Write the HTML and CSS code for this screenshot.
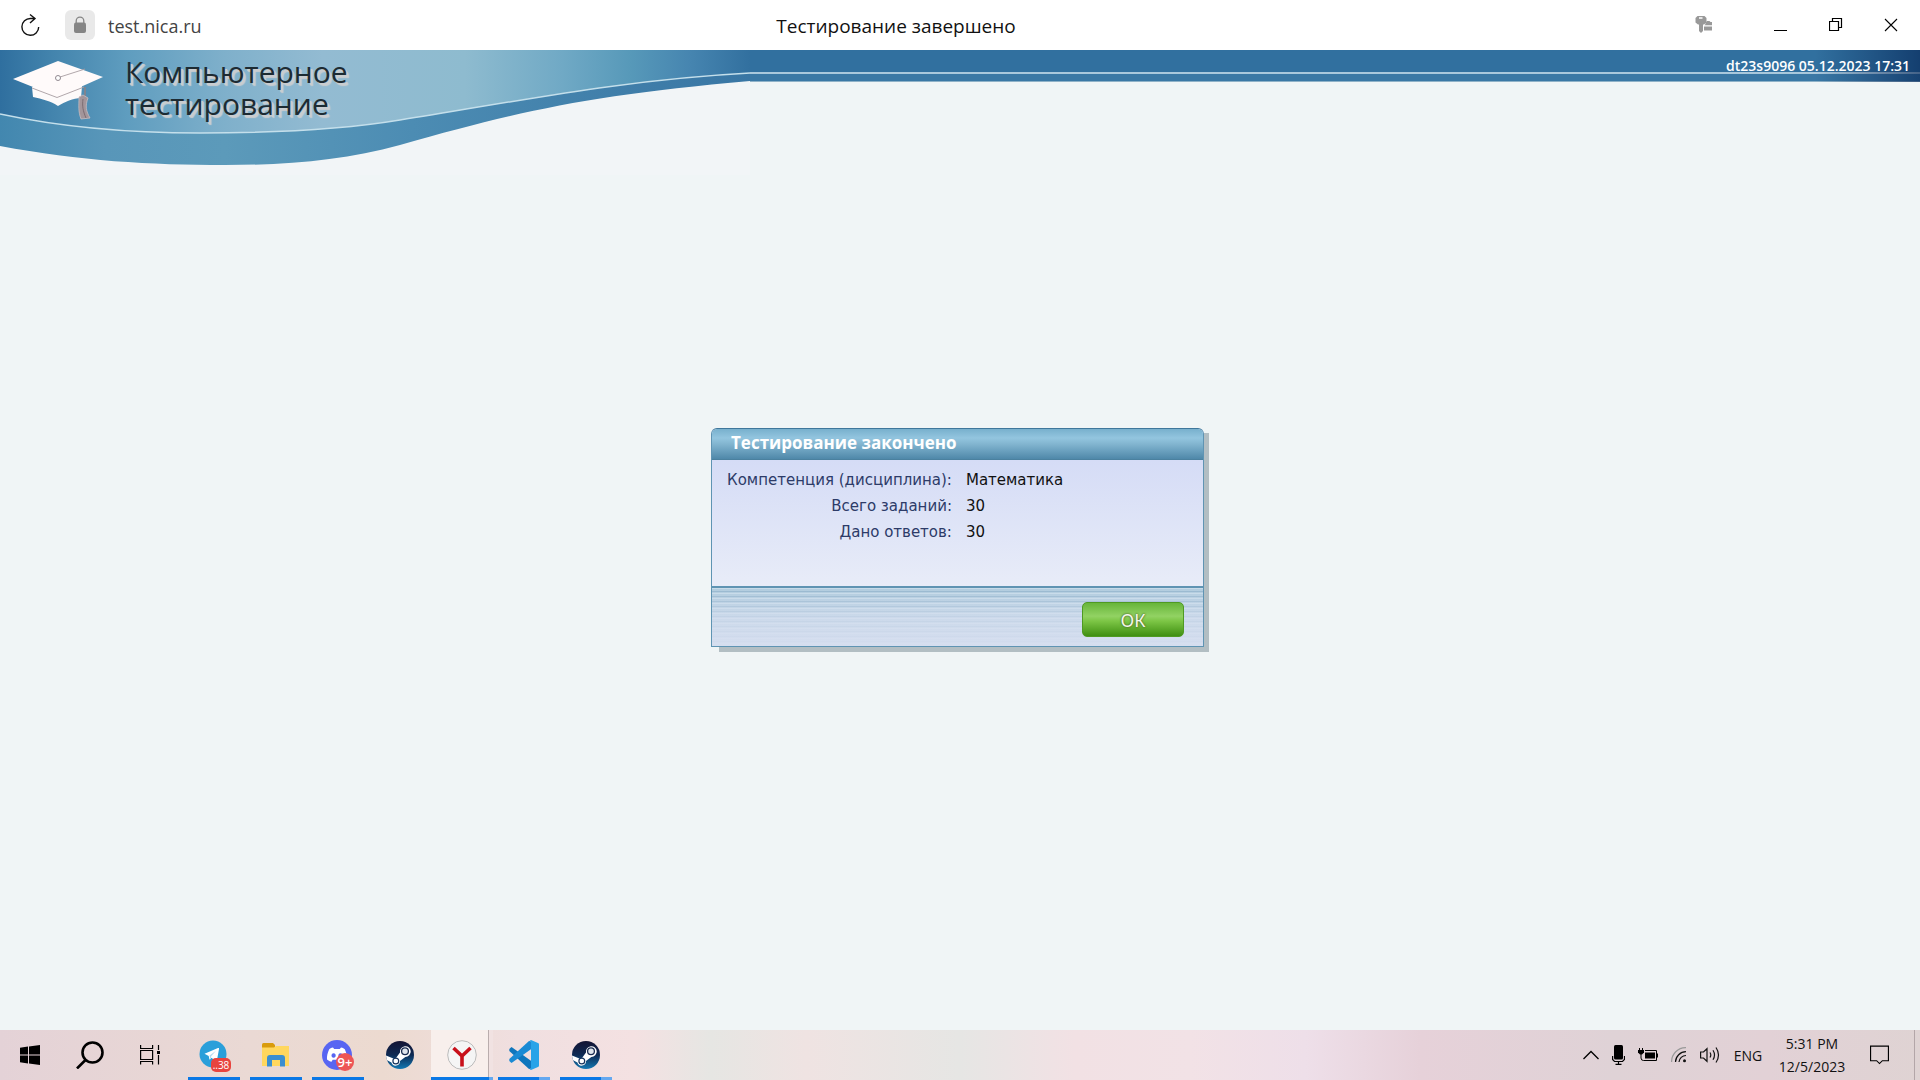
FILE: index.html
```html
<!DOCTYPE html>
<html lang="ru">
<head>
<meta charset="utf-8">
<title>Тестирование завершено</title>
<meta name="viewport" content="width=device-width, initial-scale=1">
<link rel="stylesheet" href="styles.css">
</head>
<body>
<header class="browser">
  <div class="browser-left">
    <button class="reload" type="button" aria-label="Обновить">
      <svg width="20" height="24" viewBox="0 0 20 24" fill="none" stroke="#111" stroke-width="1.400"><path d="M15 5.500H10.500A8.400 8.400 0 1 0 18.700 14M10 1.500L15 5.500L10 10"/></svg>
    </button>
    <button class="lock" type="button" aria-label="Защищённое соединение">
      <svg width="12" height="18" viewBox="0 0 12 18"><path d="M2.200 8V5a3.800 3.800 0 0 1 7.600 0v3" fill="none" stroke="#858585" stroke-width="1.300"/><rect y="6.500" width="12" height="10.500" rx="2" fill="#858585"/></svg>
    </button>
    <input class="address" type="text" value="test.nica.ru" aria-label="Адрес" readonly>
  </div>
  <div class="browser-title">Тестирование завершено</div>
  <div class="browser-right">
    <button class="key" type="button" aria-label="Пароли">
      <svg width="18" height="18" viewBox="0 0 18 18" fill="#999"><path fill-rule="evenodd" d="M2.500 0h7L11.500 2v4.500L9 8.500H8V15l-2 2-2-2V8.500H3L.5 6.500V2zM4 1.300v1.400h3.500V1.300z"/><path d="M10.500 8V7L12 5h2.500l1 1H17v3.200H9.500zM9 10.400h8v4.100H9z"/></svg>
    </button>
    <button class="win" type="button" aria-label="Свернуть"><svg width="14" height="14" viewBox="0 0 14 14"><path d="M0 12.500h13" stroke="#000"/></svg></button>
    <button class="win" type="button" aria-label="Восстановить"><svg width="14" height="14" viewBox="0 0 14 14" fill="none" stroke="#000" stroke-width="1.200"><path d="M.5 3.500h9v9h-9zM3.500 3.500v-3h9v9h-3"/></svg></button>
    <button class="win" type="button" aria-label="Закрыть"><svg width="14" height="14" viewBox="0 0 14 14"><path d="M1 1l12 12M13 1L1 13" stroke="#000" stroke-width="1.100"/></svg></button>
  </div>
</header>

<main class="page">
  <div class="banner">
    <svg class="wave" width="750" height="125" viewBox="0 50 750 125" aria-hidden="true">
      <defs>
        <linearGradient id="sky" gradientUnits="userSpaceOnUse" x1="0" y1="0" x2="750" y2="0">
          <stop offset="0" stop-color="#2f6f9f"/><stop offset=".07" stop-color="#4384ad"/><stop offset=".17" stop-color="#5f9dbf"/><stop offset=".3" stop-color="#7fb0cb"/><stop offset=".43" stop-color="#93bbd2"/><stop offset=".62" stop-color="#8ebbcf"/><stop offset=".75" stop-color="#70a9c5"/><stop offset=".84" stop-color="#5799b9"/><stop offset=".92" stop-color="#4685b0"/><stop offset="1" stop-color="#32709f"/>
        </linearGradient>
        <linearGradient id="sea" gradientUnits="userSpaceOnUse" x1="0" y1="0" x2="750" y2="0">
          <stop offset="0" stop-color="#4287af"/><stop offset=".14" stop-color="#5896b9"/><stop offset=".3" stop-color="#5c9aba"/><stop offset=".55" stop-color="#4c8cb3"/><stop offset="1" stop-color="#3976a4"/>
        </linearGradient>
      </defs>
      <rect y="50" width="750" height="125" fill="#f2f5f7"/>
      <path fill="url(#sea)" d="M0 50V146C80 161 150 165 225 165C290 165 345 160 400 145C520 111 590 95 750 81V50z"/>
      <path fill="url(#sky)" d="M0 50V114C70 129 140 133 200 133C270 133 340 130 400 120C520 101 620 80 750 73V50z"/>
      <path fill="none" stroke="#c4dfeb" stroke-width="1.500" d="M0 114C70 129 140 133 200 133C270 133 340 130 400 120C520 101 620 80 750 73"/>
      <path fill="#fdfafa" d="M32 87l1 10c9 2 18 4 25 9 7-4 15-8 23-8l1-12z"/>
      <path fill="#fffafa" d="M13 79L58 61L103 77L58 97z"/>
      <path fill="none" stroke="#a89da2" stroke-width=".9" d="M32 88l25 9.500 27-10.500M60 77l25-8"/>
      <circle cx="58" cy="78" r="2.500" fill="#fff" stroke="#918890"/>
      <path fill="none" stroke="#8f8085" stroke-width="1.500" d="M85 87v9"/>
      <path fill="#a3959a" stroke="#c8bcc0" stroke-width=".8" d="M79 97l4-2 5 3c-3 8-2 13 2 20l-9 1c-3-8-2-13-2-22z"/>
      <path fill="none" stroke="#7b6c72" d="M83 99c-1 7 0 12 3 19"/>
    </svg>
    <h1 class="brand">Компьютерное<br>тестирование</h1>
    <div class="session">dt23s9096 05.12.2023 17:31</div>
  </div>

  <div class="dialog-shadow">
    <section class="dialog" aria-labelledby="dialog-title">
      <h2 class="dialog-title" id="dialog-title">Тестирование закончено</h2>
      <div class="dialog-body">
        <table class="summary">
          <tbody>
            <tr><th scope="row">Компетенция (дисциплина):</th><td>Математика</td></tr>
            <tr><th scope="row">Всего заданий:</th><td>30</td></tr>
            <tr><th scope="row">Дано ответов:</th><td>30</td></tr>
          </tbody>
        </table>
      </div>
      <div class="dialog-footer"><button class="ok" type="button">ОК</button></div>
    </section>
  </div>
</main>

<footer class="taskbar">
  <div class="system">
    <button type="button" aria-label="Start"><svg width="20" height="20" viewBox="0 0 20 20"><path d="M0 2.700L8 1.600V9.500H0zM9 1.400L20 0v9.500H9zM0 10.500h8v7.900L0 17.300zM9 10.500h11V20L9 18.600z"/></svg></button>
    <button type="button" aria-label="Search"><svg width="28" height="28" viewBox="0 0 28 28" fill="none" stroke="#000" stroke-width="2.600"><circle cx="16.500" cy="11.500" r="10"/><path d="M9.500 19L1 27.500"/></svg></button>
    <button type="button" aria-label="Task View"><svg width="20" height="20" viewBox="0 0 20 20" fill="none" stroke="#000" stroke-width="1.200"><path d="M.6 0v3.500h12V0M.6 5.500h12v9H.6zM.6 19.500V16.500h12v3M18.500 0v5M18.500 10v9.500"/><path d="M17 6h3v3h-3z" fill="#000" stroke="none"/></svg></button>
  </div>
  <div class="apps">
    <button class="app open" type="button" aria-label="Telegram">
      <svg width="34" height="32" viewBox="0 0 34 32"><circle cx="16" cy="15" r="13.500" fill="#2a9fda"/><path fill="#fff" d="M7.500 14.800L21 9c.8-.2 1.200.2 1 1L20 21c-.3 1-.9 1.200-1.700.7l-3.800-2.900-2 1.900-.8-3.700z"/><path fill="#b9dcf0" d="M12.500 16.500l6.500-4.800-4.800 5.500-.7 3.500z"/></svg>
      <span class="badge badge-count">..38</span>
    </button>
    <button class="app open" type="button" aria-label="Explorer">
      <svg width="28" height="24" viewBox="0 0 28 24"><path fill="#d99b0c" d="M0 1.500Q0 0 1.500 0H11l2 2v3H0z"/><path fill="#ffd75e" d="M0 4.500h12l2-1.500h13v20H0z"/><path fill="#3b8fd0" d="M5 23.500V15q0-3 3-3h12q3 0 3 3v8.500h-5V17h-8v6.500z"/></svg>
    </button>
    <button class="app open" type="button" aria-label="Discord">
      <svg width="32" height="32" viewBox="0 0 32 32"><circle cx="15" cy="16" r="15" fill="#5865f2"/><path fill="#fff" fill-rule="evenodd" d="M11 8.500l1.200 1.500h5.600L19 8.500c2 .3 3 1 3.800 1.800 1.700 3.700 2.500 6.700 2.200 10.200-1.500 1.300-3 2-4.500 2.200l-1.200-2h-8.600l-1.200 2C8 22.500 6.500 21.800 5 20.500c-.3-3.500.5-6.500 2.200-10.200C8 9.500 9 8.800 11 8.500zM11.600 14.200a2.100 2.300 0 1 0 .01 0zM18.500 14.200a2.100 2.300 0 1 0 .01 0z"/></svg>
      <span class="badge badge-round">9+</span>
    </button>
    <button class="app" type="button" aria-label="Steam">
      <svg width="30" height="30" viewBox="0 0 30 30"><defs><linearGradient id="steam" x1="0" y1="0" x2="0" y2="1"><stop offset="0" stop-color="#141433"/><stop offset=".5" stop-color="#0d2a54"/><stop offset="1" stop-color="#1379b3"/></linearGradient></defs><circle cx="15" cy="15" r="14" fill="url(#steam)"/><path fill="#fff" d="M1 15.500l8 3.300 2-.7 4-5.700a5.400 5.400 0 1 1 5.300 4.600l-5.300 4a4.400 4.400 0 0 1-8.600 1.500L1.700 20z"/><circle cx="20" cy="11.300" r="3.400" fill="#dfe5ec" stroke="#1a2c50" stroke-width="1.300"/><circle cx="10.800" cy="21" r="2.900" fill="none" stroke="#16345e" stroke-width="1.200"/></svg>
    </button>
    <button class="app active open" type="button" aria-label="Yandex Browser">
      <svg width="30" height="30" viewBox="0 0 30 30"><circle cx="15" cy="15" r="14.300" fill="#f5f5f5" stroke="#bbb"/><path fill="none" stroke="#c8101a" stroke-width="3.600" d="M6.500 8l8.500 8v10.500M23.500 8L15 16"/></svg>
    </button>
    <button class="app open stacked" type="button" aria-label="Visual Studio Code">
      <svg width="30" height="30" viewBox="0 0 30 30"><path fill="#0f76bd" d="M2.500 7L.3 9v2L20 29l3-.5V21.500z"/><path fill="#1a8ad4" d="M2.500 23L.3 21v-2L20 1l3 .5v7z"/><path fill="#29a3e8" d="M22 0l7 3q1 .4 1 1.500v21q0 1.100-1 1.500l-7 3q-1 .2-1.500-.5 1.500.2 1.500-1.500V2Q22 .4 20.500.5z"/></svg>
    </button>
    <button class="app open stacked" type="button" aria-label="Steam">
      <svg width="30" height="30" viewBox="0 0 30 30"><circle cx="15" cy="15" r="14" fill="url(#steam)"/><path fill="#fff" d="M1 15.500l8 3.300 2-.7 4-5.700a5.400 5.400 0 1 1 5.300 4.600l-5.300 4a4.400 4.400 0 0 1-8.600 1.500L1.700 20z"/><circle cx="20" cy="11.300" r="3.400" fill="#dfe5ec" stroke="#1a2c50" stroke-width="1.300"/><circle cx="10.800" cy="21" r="2.900" fill="none" stroke="#16345e" stroke-width="1.200"/></svg>
    </button>
  </div>
  <div class="tray">
    <button type="button" aria-label="Hidden icons"><svg width="16" height="10" viewBox="0 0 16 10"><path d="M.5 9L8 1.500 15.500 9" fill="none" stroke="#000" stroke-width="1.300"/></svg></button>
    <button type="button" aria-label="Microphone"><svg width="13" height="20" viewBox="0 0 13 20"><rect x="2" width="9" height="14.500" rx="1.500"/><path d="M.6 11v3.500L2.500 16.500h8l2-2V11M6.500 16.500v3M3.500 19.400h6" fill="none" stroke="#000" stroke-width="1.200"/></svg></button>
    <button type="button" aria-label="Battery"><svg width="20" height="14" viewBox="0 0 20 14"><path d="M7 4.500h10v6H7z"/><path d="M7 2.500h11.500v10H5.500M19.500 5.500v4M1.500 0v2M4.500 0v2M3 6v4q0 2.500 2.500 2.500" fill="none" stroke="#000"/><path d="M0 2h6v2.500l-2 2H2l-2-2z"/></svg></button>
    <button type="button" aria-label="Wi-Fi"><svg width="16" height="16" viewBox="0 0 16 16" fill="none" stroke="#111" stroke-width="1.200"><path d="M.6 15A14 14 0 0 1 15 .7" stroke="#999"/><path d="M4.500 15A10.500 10.500 0 0 1 15 4.700M8 15a7 7 0 0 1 7-6.500"/><circle cx="13.500" cy="13.800" r="1.500" fill="#111" stroke="none"/></svg></button>
    <button type="button" aria-label="Volume"><svg width="20" height="18" viewBox="0 0 20 18" fill="none" stroke="#111" stroke-width="1.200"><path d="M.6 6h2.900L7 2.700v12.600L3.500 12H.6zM10 6.500q1.600 2.500 0 5M13 4.200q3 4.800 0 9.600M16 1.500q5 7.500 0 15"/></svg></button>
    <button class="lang" type="button">ENG</button>
    <button class="clock" type="button">5:31 PM<br>12/5/2023</button>
    <button class="notes" type="button" aria-label="Notifications"><svg width="20" height="20" viewBox="0 0 20 20"><path d="M.6.6h18.800v15.400H13L10 19l-3-3H.6z" fill="none" stroke="#000" stroke-width="1.200"/></svg></button>
  </div>
</footer>
</body>
</html>
```
FILE: styles.css
```css
* { box-sizing: border-box; }

body {
  margin: 0;
  min-height: 100vh;
  display: flex;
  flex-direction: column;
  background: #f0f5f6;
  font-family: "Open Sans", "Noto Sans", sans-serif;
}

button {
  display: flex;
  align-items: center;
  justify-content: center;
  padding: 0;
  border: 0;
  background: none;
  color: inherit;
  font: inherit;
}

svg { display: block; }

/* Browser bar */
.browser {
  display: flex;
  align-items: center;
  height: 50px;
  background: #fff;
  color: #111;
  font-size: 18px;
}
.browser-left {
  display: flex;
  align-items: center;
  width: 220px;
  padding-left: 20px;
}
.reload { width: 20px; }
.lock {
  width: 30px;
  height: 30px;
  margin: 0 13px 0 25px;
  border-radius: 6px;
  background: #e9e9e9;
}
.address {
  width: 110px;
  padding: 2px 0 0;
  border: 0;
  background: none;
  color: #444;
  font: inherit;
}
.browser-title {
  flex: 1;
  padding-top: 2px;
  font-size: 19px;
  text-align: center;
}
.browser-right {
  display: flex;
  justify-content: flex-end;
  width: 348px;
  padding-right: 2px;
}
.key { width: 54px; margin-right: 22px; }
.win { width: 55px; height: 50px; }

/* Page */
.page {
  flex: 1;
  display: grid;
  grid-template: 1fr / 1fr;
}
.page > * { grid-area: 1 / 1; }

.banner {
  display: grid;
  grid-template: 32px 1fr / 750px 1fr;
  align-self: start;
  background:
    linear-gradient(90deg, transparent, rgba(0, 30, 80, .6)) right top / 105px 32px no-repeat,
    linear-gradient(#31709f 22px, #a9c8dc 22px, #a9c8dc 24px, #3a78a5 24px, #3a78a5 31px, #8fb2c8 31px) left top / 100% 32px no-repeat;
}
.wave { grid-area: 1 / 1 / 3 / 2; }
.brand {
  grid-area: 1 / 1 / 3 / 2;
  margin: 6px 0 0 125px;
  color: #1d2b33;
  font-size: 30px;
  font-weight: 400;
  line-height: 32px;
  text-shadow: 2px 2px 0 #c9cdd0, 3px 3px 1px #c9cdd0;
}
.session {
  grid-area: 1 / 2;
  padding-right: 10px;
  color: #fff;
  font-size: 14px;
  font-weight: 600;
  line-height: 32px;
  text-align: right;
}

/* Dialog */
.dialog-shadow {
  place-self: center;
  padding: 0 5px 5px 0;
  background: linear-gradient(#b2bec3, #b2bec3) 8px 5px no-repeat;
}
.dialog {
  width: 493px;
  border: 1px solid #5f94b3;
  border-top-color: #3f779b;
  border-radius: 6px 6px 0 0;
  overflow: hidden;
  background: #dbe0f5;
}
.dialog-title {
  margin: 0;
  padding: 0 0 2px 19px;
  border-bottom: 1px solid #4b819f;
  background: linear-gradient(#78b0cd, #93c5df 30%, #82b5d0 50%, #4f88a9);
  color: #fff;
  font-size: 17px;
  font-weight: 700;
  line-height: 28px;
}
.dialog-body {
  min-height: 126px;
  padding: 7px 15px;
  background: linear-gradient(#d5dcf6, #e8ecf8);
}
.summary {
  border-collapse: collapse;
  font-family: "DejaVu Sans", Verdana, sans-serif;
  font-size: 15px;
  line-height: 26px;
}
.summary th {
  padding: 0;
  color: #2d3b68;
  font-weight: 400;
  text-align: right;
}
.summary td { padding: 0 0 0 14px; color: #111; }
.dialog-footer {
  display: flex;
  justify-content: flex-end;
  padding: 14px 19px 9px;
  border-top: 2px solid #5f94b3;
  background:
    linear-gradient(rgba(215, 223, 240, 0), rgba(215, 223, 240, .7) 50%, rgba(215, 223, 240, .95)),
    repeating-linear-gradient(#c7dbe9 0 1px, #b1ccde 1px 3px, #96b7ce 3px 4px, #b1ccde 4px 5px);
}
.ok {
  width: 102px;
  height: 35px;
  border: 1px solid #4f9a22;
  border-radius: 5px;
  background: linear-gradient(#67b53a, #92d263 40%, #7cc545 55%, #3f8f12);
  color: #f4f8ea;
  font-family: "Noto Sans", sans-serif;
  font-size: 18px;
  text-shadow: 0 0 2px #55702c, 0 0 2px #55702c;
}

/* Taskbar */
.taskbar {
  display: flex;
  height: 50px;
  background: linear-gradient(90deg, #e4d2d7, #ead9d4 13%, #ecdad0 20%, #f0dfe0 27%, #f4e1e2 33%, #e6e6e3 37%, #efe3e2 42%, #e6e6e4 50%, #f2e1e4 56%, #f2e2e6 62%, #eedfe9 68%, #e6d1d9 74%, #dfd2d6 84%, #e2d1d6 92%, #dfd3d3);
}
.system { display: flex; }
.system button { width: 60px; }
.apps { display: flex; margin-left: 3px; }
.app {
  position: relative;
  width: 62px;
}
.app.open::after {
  content: "";
  position: absolute;
  left: 5px;
  right: 5px;
  bottom: 0;
  height: 3px;
  background: #0a78e6;
}
.app.active { background: linear-gradient(90deg, #f8efec 57px, #b9adad 57px, #b9adad 58px, #f1e2e2 58px); }
.app.active::after { left: 0; right: 0; background: linear-gradient(90deg, #0a78e6 58px, #64a8f0 58px); }
.app.stacked::after { background: linear-gradient(90deg, #0a78e6 41px, #64a8f0 41px); }
.badge {
  position: absolute;
  background: #e8443f;
  color: #fff;
}
.badge-count {
  left: 28px;
  top: 28px;
  width: 20px;
  border-radius: 5px;
  font-size: 10px;
  line-height: 14px;
}
.badge-round {
  left: 29px;
  top: 23px;
  width: 18px;
  border-radius: 9px;
  background: #ed5555;
  font-size: 13px;
  font-weight: 600;
  line-height: 18px;
}

.tray {
  display: flex;
  align-items: stretch;
  gap: 13px;
  margin-left: auto;
  padding-right: 5px;
  color: #111;
  font-size: 14px;
}
.clock { width: 72px; line-height: 23px; }
.notes { width: 45px; padding: 0 25px 0 0; border-right: 1px solid #b3a6a8; }
.tray .lang { width: 30px; }
.tray .notes { margin-left: 9px; }
```
